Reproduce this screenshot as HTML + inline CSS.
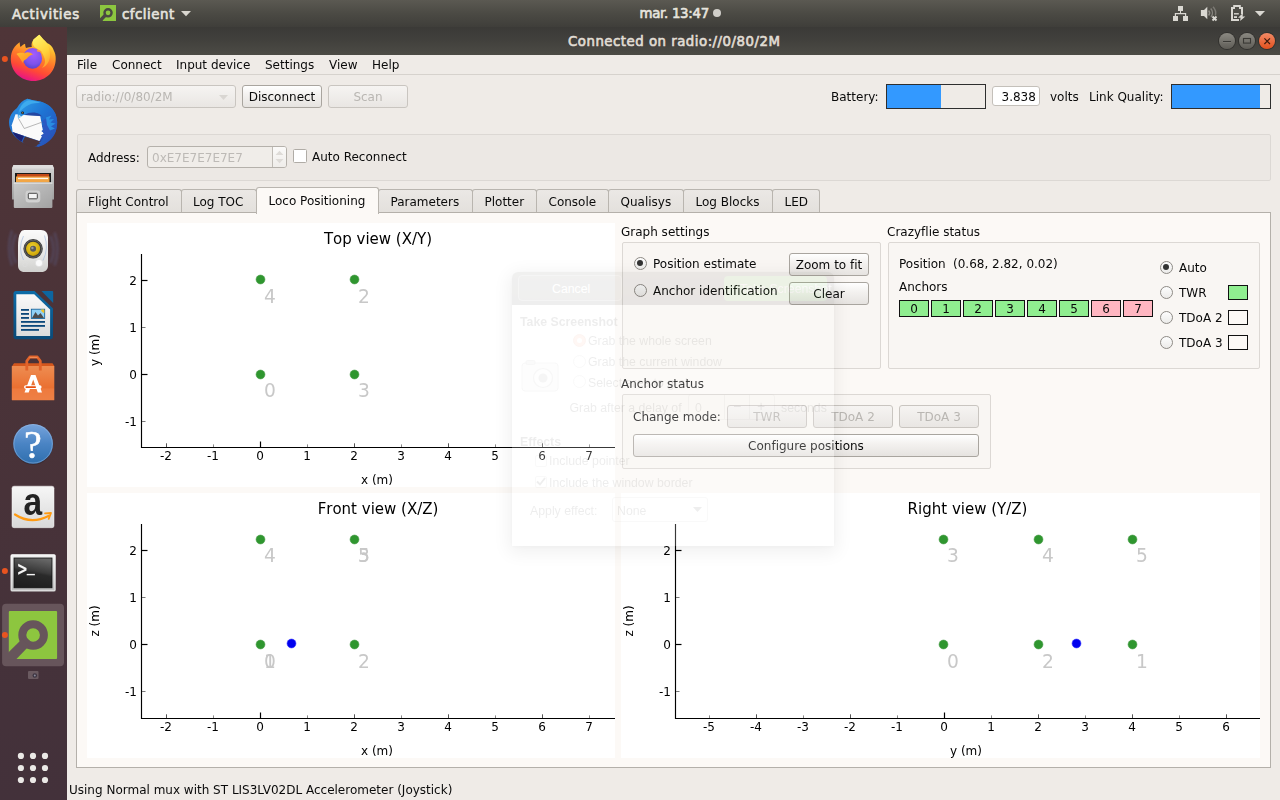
<!DOCTYPE html>
<html lang="en">
<head>
<meta charset="utf-8">
<title>Connected on radio://0/80/2M</title>
<style>
*{box-sizing:border-box;margin:0;padding:0}
html,body{width:1280px;height:800px;overflow:hidden;background:#efebe7}
body{position:relative;font-family:"DejaVu Sans","Liberation Sans",sans-serif;font-size:12px;color:#0a0a0a;line-height:15px;font-variant-ligatures:none}
.abs{position:absolute}
.g{position:absolute;white-space:nowrap;line-height:15px;height:15px}
.t{position:absolute;white-space:nowrap;line-height:17px;height:17px}
#topbar{position:absolute;left:0;top:0;width:1280px;height:27px;background:linear-gradient(#5b5952 0%,#4b4a44 50%,#3f3e3a 100%)}
#topbar .t{color:#e6e4de;font-size:13.33px;-webkit-text-stroke:0.62px #e6e4de;letter-spacing:0.7px;line-height:19px;height:19px}
#dock{position:absolute;left:0;top:27px;width:67px;height:773px;will-change:transform;background:linear-gradient(#4f3538 0%,#4b3338 40%,#45323a 80%,#43313a 100%)}
#titlebar{position:absolute;left:67px;top:27px;width:1213px;height:28px;background:linear-gradient(#3b3a37 0%,#42413d 50%,#4c4b45 100%)}
#titlebar .t{color:#e1ddd4;font-size:13.33px;-webkit-text-stroke:0.62px #e1ddd4;letter-spacing:0.49px;line-height:19px;height:19px}
.wbtn{position:absolute;top:6px;width:16px;height:16px;border-radius:50%;background:linear-gradient(#8b8982,#5e5c56);box-shadow:0 0 0 1px #32312e}
#win{position:absolute;left:0;top:0;width:1280px;height:800px;will-change:transform}
#menubar{position:absolute;left:67px;top:55px;width:1213px;height:20px;border-bottom:1px solid #d6d2cd}
.btn{position:absolute;height:23px;border:1px solid #a9a59f;border-radius:3px;background:linear-gradient(#ffffff 0%,#f4f2f0 40%,#e6e3e0 100%);text-align:center;line-height:23px;font-size:12px;color:#0a0a0a;white-space:nowrap}
.btn.dis{color:#b9b6b2;border-color:#c9c5c0;background:linear-gradient(#f6f4f2,#e9e6e3)}
.grp{position:absolute;border:1px solid #dcd8d4;border-radius:2px;background:rgba(0,0,0,0.013)}
.tab{position:absolute;top:189px;height:24px;border:1px solid #b9b5af;border-bottom:none;border-radius:3px 3px 0 0;background:linear-gradient(#ebe8e5,#e3e0dc);font-size:12px;line-height:25px;padding-left:11.5px;white-space:nowrap}
.tab.sel{top:187px;height:27px;background:#fcf9f6;line-height:27px;z-index:3;padding-left:11.5px}
#pane{position:absolute;left:76px;top:212px;width:1195px;height:556px;border:1px solid #b4b0aa;background:#fcf9f6}
.plot{position:absolute;background:#fff}
.radio{position:absolute;width:13px;height:13px;border-radius:50%;border:1px solid #8e8a85;background:linear-gradient(#fdfdfd,#ecebe9)}
.radio.on::after{content:"";position:absolute;left:2.5px;top:2.5px;width:6px;height:6px;border-radius:50%;background:#333}
.anc{position:absolute;top:0;width:30px;height:17px;border:1px solid #111;font-size:12px;line-height:16px;text-align:center}
.sw{position:absolute;width:20px;height:15px;border:1px solid #111}
svg{position:absolute;overflow:visible}
svg text{font-family:"DejaVu Sans","Liberation Sans",sans-serif;font-kerning:none}
</style>
</head>
<body>

<div id="topbar">
<div class="t" style="left:12px;top:5px">Activities</div>
<svg style="left:100px;top:5px" width="16" height="16" viewBox="0 0 16 16"><rect width="16" height="16" fill="#8cc63f"/><circle cx="8.050" cy="7.800" r="3.550" fill="none" stroke="#4a4843" stroke-width="2.400"/><path d="M0 13.200L4.600 8.600L7 11L2.800 15.200V16H0z" fill="#4a4843"/></svg>

<div class="t" style="left:122px;top:5px;letter-spacing:0.5px">cfclient</div>
<svg style="left:181px;top:11px" width="10" height="6" viewBox="0 0 10 6"><path d="M0 0h10L5 5.300z" fill="#d9d6cf"/></svg>
<div class="t" style="left:639.5px;top:4px;letter-spacing:-0.29px">mar. 13:47</div>
<div class="abs" style="left:713px;top:9px;width:8px;height:8px;border-radius:50%;background:#d0cec9"></div>
<svg style="left:1172px;top:5px" width="96" height="17" viewBox="0 0 96 17"><g fill="#dad8d2"><rect x="6" y="1" width="5" height="5"/><rect x="1" y="11" width="5" height="5"/><rect x="11" y="11" width="5" height="5"/><path d="M8 6h1v2h5.200v3h-1.200v-1.800h-9v1.800h-1.200v-3h5.200z"/><path d="M28.900 5.100h3.100l3.300-3.300v12.400l-3.300-3.300h-3.100z"/><g fill="none" stroke-width="1.500"><path d="M36.600 5.600a3.600 3.600 0 0 1 0 4.800" stroke="#8f8d87"/><path d="M38.700 3.600a6.400 6.400 0 0 1 0.300 8.400" stroke="#85837d"/><path d="M41 1.700a9.300 9.300 0 0 1 2.400 8.600" stroke="#7b7973"/><path d="M40.500 11.500l4 4M44.500 11.500l-4 4" stroke="#dad8d2" stroke-width="1.900"/></g><path d="M59 2h2.200v-2h7.600v2h2.200v7h-2v-5h-2v-2h-4v2h-2v10h6v2h-8z"/><rect x="62" y="8.100" width="4.800" height="1.400"/><rect x="62" y="11.200" width="3" height="1.800"/><path d="M71 8.100l-5 4.600h2.600l-0.500 3.400 5.200-4.700h-2.700z"/><path d="M82.900 5.900h10.100l-5.050 5.300z"/></g></svg>

</div>
<div id="dock">
<svg style="left:0;top:0" width="67" height="773" viewBox="0 27 67 773">
<defs>
<linearGradient id="ffb" x1="0.72" y1="0.05" x2="0.38" y2="1"><stop offset="0" stop-color="#fff44f"/><stop offset="0.25" stop-color="#ffb52d"/><stop offset="0.5" stop-color="#ff7a2a"/><stop offset="0.74" stop-color="#ff4a35"/><stop offset="0.88" stop-color="#f52a62"/><stop offset="1" stop-color="#e31587"/></linearGradient>
<radialGradient id="ffg" cx="0.55" cy="0.3" r="0.8"><stop offset="0" stop-color="#a35cff"/><stop offset="0.6" stop-color="#7d52ec"/><stop offset="1" stop-color="#4a3fc4"/></radialGradient>
<linearGradient id="fffl" x1="0.3" y1="0" x2="0.8" y2="1"><stop offset="0" stop-color="#fff36a"/><stop offset="0.6" stop-color="#ffd53a"/><stop offset="1" stop-color="#ffa12c"/></linearGradient>
<linearGradient id="ffhead" x1="0" y1="0" x2="1" y2="1"><stop offset="0" stop-color="#ffbd2f"/><stop offset="1" stop-color="#ff8a20"/></linearGradient>
<linearGradient id="tbb" x1="0.2" y1="0" x2="0.8" y2="1"><stop offset="0" stop-color="#2a8fe0"/><stop offset="0.5" stop-color="#1f6fd0"/><stop offset="1" stop-color="#2b3fa8"/></linearGradient>
<linearGradient id="tbh" x1="0" y1="0" x2="1" y2="1"><stop offset="0" stop-color="#2f9fe8"/><stop offset="0.45" stop-color="#1e74d4"/><stop offset="1" stop-color="#2a48b0"/></linearGradient>
<linearGradient id="fcab" x1="0" y1="0" x2="0" y2="1"><stop offset="0" stop-color="#d6d6d6"/><stop offset="1" stop-color="#9d9d9d"/></linearGradient>
<linearGradient id="fdrw" x1="0" y1="0" x2="1" y2="1"><stop offset="0" stop-color="#c9c9c9"/><stop offset="1" stop-color="#a2a2a2"/></linearGradient>
<linearGradient id="rb" x1="0" y1="0" x2="0" y2="1"><stop offset="0" stop-color="#fbfbfb"/><stop offset="0.6" stop-color="#e6e6e4"/><stop offset="1" stop-color="#d0d0ce"/></linearGradient>
<radialGradient id="rby" cx="0.45" cy="0.4" r="0.7"><stop offset="0" stop-color="#f0d435"/><stop offset="0.7" stop-color="#d3ad0e"/><stop offset="1" stop-color="#a88708"/></radialGradient>
<linearGradient id="lob" x1="0" y1="0" x2="0" y2="1"><stop offset="0" stop-color="#0c6ca8"/><stop offset="1" stop-color="#0a4a78"/></linearGradient>
<linearGradient id="lop" x1="0" y1="0" x2="0" y2="1"><stop offset="0" stop-color="#f9f9f9"/><stop offset="1" stop-color="#dcdcdc"/></linearGradient>
<linearGradient id="usb" x1="0" y1="0" x2="0" y2="1"><stop offset="0" stop-color="#ee8d52"/><stop offset="0.65" stop-color="#ea6f30"/><stop offset="0.66" stop-color="#ee7a3e"/><stop offset="1" stop-color="#ee8045"/></linearGradient>
<linearGradient id="hlp" x1="0" y1="0" x2="0" y2="1"><stop offset="0" stop-color="#77a4dc"/><stop offset="0.5" stop-color="#4a84c4"/><stop offset="1" stop-color="#2f6fae"/></linearGradient>
<linearGradient id="amz" x1="0" y1="0" x2="0" y2="1"><stop offset="0" stop-color="#f6f6f6"/><stop offset="1" stop-color="#d9d9d9"/></linearGradient>
<linearGradient id="trf" x1="0" y1="0" x2="0" y2="1"><stop offset="0" stop-color="#f2f2f2"/><stop offset="1" stop-color="#bdbdbd"/></linearGradient>
<linearGradient id="trs" x1="0.6" y1="0" x2="0.35" y2="1"><stop offset="0" stop-color="#666"/><stop offset="0.42" stop-color="#3a3a3a"/><stop offset="0.5" stop-color="#2a2a2a"/><stop offset="1" stop-color="#1e1e1e"/></linearGradient>
<filter id="blur1" x="-50%" y="-50%" width="200%" height="200%"><feGaussianBlur stdDeviation="0.9"/></filter>
</defs>

<!-- running indicators -->
<circle cx="4.9" cy="59" r="3" fill="#e95420"/>
<circle cx="4.9" cy="571" r="3" fill="#e95420"/>

<!-- firefox -->
<g transform="translate(0 27)">
<path d="M39.400 7.700C42 11 44.500 13.500 46.900 15.900C48.500 16.500 49.500 17.200 50.300 18C52 19.500 53.200 21.500 53.800 23.500C55.200 26 55.800 29 55.700 32C55.700 44.500 46 54 33.500 54C21 54 10.800 44.500 10.800 32C10.800 27.500 12 24 13.400 21.800C15 19 17.500 16.500 19.700 15.200C19.700 17 20 18.800 20.500 20.100C22 18.500 23.500 17.500 25.100 16.800C25.100 18.500 25.500 20 26 20.900C28 20.300 30 20.100 31.800 20.100C31 17.500 32 14.800 33.500 12.600C35.500 10.500 37.500 9 39.400 7.700Z" fill="url(#ffb)"/>
<path d="M39.400 7.700C42 11 44.500 13.500 46.900 15.900C49 20 50 24 50 28C50 34 47 39 42 41C45 38 46 34 44 30C43 26 40 23 36 21C33 19.500 32 16 33.500 12.600C35.500 10.500 37.500 9 39.400 7.700Z" fill="url(#fffl)" opacity="0.9"/>
<ellipse cx="32.500" cy="31.400" rx="9.600" ry="10.300" fill="url(#ffg)"/>
<path d="M16.500 27C19 25.500 22 25.800 24.500 26.200C27 24.500 30 24.800 33 27.500C30.500 28 28.500 29.500 27 31.500C25 33 23.500 33.200 23 36C21 33 19 29.500 16.500 27Z" fill="url(#ffhead)"/>
<path d="M36.500 23.500C39 22.500 41 23.500 42 25.500C40.500 24.800 38.500 24.500 37.500 25C37.500 24.300 37 23.800 36.500 23.500Z" fill="#ff9a3a"/>
</g>

<!-- thunderbird -->
<g transform="translate(0 90)">
<path d="M27.600 8.800C30 9.500 32 10.200 34 10.500C44 11 52 16 55.500 24C57.500 29 57.800 35 56 40.500C53.500 48.500 46 55 37.500 57L34.500 56.200C30 56 24 54 19.500 50.500C13 46 9 39 9 32.500C9 27 12 21.500 17 18C19.500 13.500 23 10 27.600 8.800Z" fill="url(#tbb)"/>
<path d="M15.500 24.300L40.200 26L43.500 43.500L39.400 51.100L12.600 41.900L11.700 35.200Z" fill="#fafafa"/>
<path d="M18.500 28.500L24.300 38.500L41.900 32.200" fill="none" stroke="#9a9a9a" stroke-width="0.700"/>
<path d="M12.600 41.900L24 46L21.500 51.500C17.500 49.500 14.500 46 12.600 41.900Z" fill="#1d2273"/>
<path d="M18 28.500C17 22 20 14 27.600 8.800C30 9.500 32 10.200 34 10.500C44 11 52 16 55.500 24C57.500 29 57.800 35 56 40.500C53.500 48.500 46 55 37.500 57L34.500 56.200C39 54 42 51 43.500 47.500L41 45.500L44.500 43.500L41.500 41L45 39L42 36.500L45 34L42 32L44 29.500C42.500 25 38 22.500 33 22.500C28 22.500 23 24.500 20 27.500Z" fill="url(#tbh)"/>
<path d="M44 29.500L50.500 27L48 31L53 30L49.500 34L54.500 34.500L50 38L54 40L49 42L52 45L47 46L49 49.500L43.500 47.500L41 45.500L44.500 43.500L41.500 41L45 39L42 36.500L45 34L42 32Z" fill="#2e55c0" opacity="0.85"/>
<path d="M22.500 51.800L25 46.400L39.400 51.300L41.500 50.500L38.500 53L40.500 53.300L36.500 55.200L38 56.200L34.300 56.800L29 56.300L24.500 54Z" fill="#4d3438"/>
<path d="M46 27.500L51.500 25.500L49 29.500L54 29L50.500 32.500L55.500 33.500L51 36.500L55 38.500L50 40.500L47 35Z" fill="#2ba3ee" opacity="0.7"/>
<path d="M19 22C20 16.500 23.500 12 28.500 10.200C33 10.300 37 11.200 40.500 13C35 12.500 30 13.500 26 16.500C23 18.500 21 20.500 19 22Z" fill="#45b4f2" opacity="0.75"/>
<path d="M33 22.500C37.500 22.500 41.500 24.500 43.500 28.500L41.800 26.200L24 25C27 23.300 30 22.500 33 22.500Z" fill="#23338f" opacity="0.7"/>
<path d="M18 28.500L18.800 24.500L21.500 26.500Z" fill="#a8dcf2"/>
<circle cx="22.600" cy="22.800" r="1.400" fill="#15151f"/>
<circle cx="22.600" cy="22.800" r="0.600" fill="#c8a050"/>
</g>

<!-- files -->
<g transform="translate(0 153)">
<path d="M13.500 12h39l1.500 3.500v31h-42v-31z" fill="url(#fcab)"/>
<path d="M13.500 12h39l1.500 3.500h-42z" fill="#dedede"/>
<rect x="15" y="20" width="36" height="9.500" fill="#1b1b1b"/>
<rect x="17" y="21" width="32" height="8" fill="#c24a18"/>
<rect x="16" y="23.500" width="33.500" height="6" fill="#f2a646"/>
<rect x="18" y="24.800" width="30" height="1.300" fill="#fff8ee"/>
<rect x="13.800" y="29.500" width="38.600" height="25.500" rx="1" fill="url(#fdrw)"/>
<rect x="13.800" y="29.500" width="38.600" height="1.200" fill="#e4e4e4"/>
<rect x="26" y="38" width="13.800" height="11" rx="2.200" fill="#cfcfcf" stroke="#d6d6d6" stroke-width="0.800"/>
<rect x="28.300" y="40.300" width="9" height="5.500" rx="0.800" fill="#f4f4f4" stroke="#4a4a4a" stroke-width="1"/>
</g>

<!-- rhythmbox -->
<g transform="translate(0 217)">
<g fill="none" stroke="#5d6594" stroke-opacity="0.34" stroke-width="2.600" filter="url(#blur1)">
<path d="M16 17q-7 15 0 29"/><path d="M12 13.500q-6 18 0 35"/>
<path d="M50.500 19q6 14 0 27"/><path d="M54.500 15.500q6 17 0 33"/>
</g>
<path d="M24.500 13h16.500c4.500 0 7 3 7 7.500v28c0 4-2.500 6.500-6.500 6.500h-17c-4 0-6.500-2.500-6.500-6.500v-19c0-6 0.500-11 2.500-14 1-1.800 2.500-2.500 4-2.500z" fill="url(#rb)"/>
<g fill="none" stroke="#9db8de" stroke-opacity="0.6" stroke-width="1"><path d="M23.500 19q-6 12 0 24"/><path d="M43 43.500q6-12 1.500-25"/></g>
<circle cx="33.100" cy="31.800" r="9.700" fill="#3b3b3b"/>
<circle cx="33.100" cy="31.800" r="8.600" fill="none" stroke="#6a6a6a" stroke-width="0.800"/>
<circle cx="33.100" cy="31.800" r="7.100" fill="url(#rby)"/>
<circle cx="33.100" cy="31.800" r="3" fill="#5a5a5a"/>
<circle cx="32.400" cy="31" r="1.200" fill="#9a9a9a"/>
<circle cx="39" cy="46" r="3.600" fill="#fafafa" stroke="#dcdcdc" stroke-width="0.600"/>
<circle cx="25" cy="47.500" r="2.200" fill="none" stroke="#dedede" stroke-width="0.600"/>
</g>

<!-- libreoffice writer -->
<g transform="translate(0 281)">
<path d="M16 10h18.500l18.500 17.500v28.300c0 1.500-1 2.500-2.500 2.500h-34.500c-1.500 0-2.500-1-2.500-2.500v-43.300c0-1.500 1-2.500 2.500-2.500z" fill="url(#lob)"/>
<path d="M41.500 10h10.500c0.800 0 1.200 0.500 1.200 1.200v10.800z" fill="#0d66a0"/>
<path d="M16.300 13.200h17.900l15.900 15.300v26.500h-33.800z" fill="url(#lop)"/>
<g fill="#0b477a"><rect x="21" y="28" width="8" height="1.800"/><rect x="21" y="32" width="8" height="1.800"/><rect x="21" y="36" width="8" height="1.800"/><rect x="21" y="40" width="24" height="1.800"/><rect x="21" y="44" width="24" height="1.800"/><rect x="21" y="48" width="18" height="1.800"/></g>
<rect x="31.300" y="28.200" width="13.400" height="9.300" fill="#8fd0f5" stroke="#0b5a94" stroke-width="0.800"/>
<path d="M32 37l3.500-6 2.500 3.500 2.500-2.500 3.500 5z" fill="#4d4d4d"/>
<path d="M41 28.600h3.300v3.300c-1.800 0-3.300-1.500-3.300-3.300z" fill="#f3c327"/>
</g>

<!-- ubuntu software -->
<g transform="translate(0 345)">
<path d="M14 18.200h38.500l2 3h-42.500z" fill="#d4571d"/>
<rect x="11.800" y="21" width="42.500" height="34.300" rx="0.500" fill="url(#usb)"/>
<path d="M26.800 25.500v-9.500l3-4h7.500l3 4v9.500" fill="none" stroke="#e2632a" stroke-width="2.800" stroke-linejoin="round"/>
<path d="M29.500 12.500h8" stroke="#f08a55" stroke-width="1.200"/>
<path d="M24.500 47.500l6.500-17.500h4.500l6.500 17.500h-4.200l-4.600-13-4.500 13z" fill="#fff"/>
<rect x="24" y="40.300" width="17.600" height="3.600" rx="1.800" fill="#fff"/>
<rect x="25.500" y="41.300" width="10.500" height="1.700" rx="0.800" fill="#e8500f"/>
</g>

<!-- help -->
<g transform="translate(0 409)">
<ellipse cx="33.100" cy="36.500" rx="19" ry="19.500" fill="#2a1c20" opacity="0.35"/>
<circle cx="33.100" cy="34.800" r="19.900" fill="url(#hlp)"/>
<circle cx="33.100" cy="34.800" r="19.200" fill="none" stroke="#a8c6ea" stroke-opacity="0.6" stroke-width="0.7"/>
<text x="33" y="49" style="font-family:'Liberation Serif','DejaVu Serif',serif" font-size="40" text-anchor="middle" fill="#fff" stroke="#fff" stroke-width="0.5">?</text>
</g>

<!-- amazon -->
<g transform="translate(0 473)">
<rect x="12" y="13.200" width="42" height="41.500" rx="2" fill="url(#amz)" stroke="#f4f4f4" stroke-width="0.500"/>
<text transform="translate(32.800 41.600) scale(0.86 1)" style="font-family:'Liberation Sans','DejaVu Sans',sans-serif" font-weight="bold" font-size="39" text-anchor="middle" fill="#222">a</text>
<path d="M15 41.500q16 10.500 33.500 1.500" fill="none" stroke="#ff9a12" stroke-width="2.200" stroke-linecap="round"/>
<path d="M45 40.300l6-0.300-2.300 5.800" fill="none" stroke="#ff9a12" stroke-width="1.800" stroke-linejoin="round" stroke-linecap="round"/>
</g>

<!-- terminal -->
<g transform="translate(0 537)">
<rect x="10.500" y="17.200" width="45.200" height="37.300" rx="1.500" fill="url(#trf)"/>
<rect x="11.300" y="18" width="43.600" height="35.700" rx="1" fill="none" stroke="#fff" stroke-opacity="0.7" stroke-width="0.800"/>
<rect x="14" y="21" width="38" height="29.800" fill="url(#trs)" stroke="#111" stroke-width="0.800"/>
<text transform="translate(17.400 38.600) scale(1 1.28)" style="font-family:'DejaVu Sans Mono','Liberation Mono',monospace" font-weight="bold" font-size="16" fill="#f4f4f4">&gt;</text>
<text x="26.800" y="35.200" style="font-family:'DejaVu Sans Mono','Liberation Mono',monospace" font-weight="bold" font-size="13.500" fill="#f4f4f4">_</text>
</g>

<!-- cfclient (focused) -->
<rect x="2.100" y="603.800" width="61.900" height="62.400" rx="4" fill="#67555b"/>
<rect x="8.800" y="610.900" width="48.300" height="48.100" rx="1" fill="#8dc63f"/>
<circle cx="33.100" cy="635" r="10.800" fill="none" stroke="#67555b" stroke-width="8"/>
<path d="M8 652.800L22 639l7 7-13 13.600h-8z" fill="#67555b"/>
<path d="M22 639l3-3 7.500 7.500-3 3z" fill="#67555b"/>
<circle cx="4.900" cy="635" r="3" fill="#e95420"/>

<!-- tiny fading screenshot icon -->
<rect x="28" y="671" width="10.500" height="8" rx="1" fill="#6a5a60"/>
<circle cx="34.800" cy="675.500" r="2.300" fill="#3c3440"/>
<circle cx="34.800" cy="675.500" r="1" fill="#8a8a9a"/>

<!-- apps grid -->
<g fill="#ebe9e6">
<circle cx="20.900" cy="755.900" r="3.100"/><circle cx="33" cy="755.900" r="3.100"/><circle cx="45" cy="755.900" r="3.100"/>
<circle cx="20.900" cy="768" r="3.100"/><circle cx="33" cy="768" r="3.100"/><circle cx="45" cy="768" r="3.100"/>
<circle cx="20.900" cy="780" r="3.100"/><circle cx="33" cy="780" r="3.100"/><circle cx="45" cy="780" r="3.100"/>
</g>
</svg>

</div>
<div id="titlebar">
<div class="t" style="left:501px;top:4.5px">Connected on radio://0/80/2M</div>
<div class="wbtn" style="left:1152px"><svg style="left:4px;top:8.200px" width="8" height="2" viewBox="0 0 8 2"><rect width="8" height="1.200" fill="#3a3935"/><rect y="1.200" width="8" height="0.800" fill="#9a9891" opacity="0.5"/></svg></div>
<div class="wbtn" style="left:1172px"><svg style="left:4px;top:5.300px" width="8" height="6" viewBox="0 0 8 6"><rect x="0.500" y="0.500" width="7" height="4.600" fill="none" stroke="#3a3935" stroke-width="1.100"/></svg></div>
<div class="wbtn" style="left:1192px;background:linear-gradient(#f28a66,#e2501d)"><svg style="left:4.800px;top:4.800px" width="6.400" height="6.400" viewBox="0 0 6.400 6.400"><path d="M0.400 0.400l5.600 5.600M6 0.400l-5.600 5.600" stroke="#3d1a0c" stroke-width="1.150" fill="none"/></svg></div>
</div>
<div id="win">
<div id="menubar"></div>
<div class="t" style="left:77px;top:57px">File</div>
<div class="t" style="left:112px;top:57px">Connect</div>
<div class="t" style="left:176px;top:57px">Input device</div>
<div class="t" style="left:265px;top:57px">Settings</div>
<div class="t" style="left:329px;top:57px">View</div>
<div class="t" style="left:372px;top:57px">Help</div>

<!-- toolbar -->
<div class="btn dis" style="left:76px;top:85px;width:160px;text-align:left;padding-left:4px">radio://0/80/2M<svg style="left:142px;top:9px" width="9" height="5" viewBox="0 0 9 5"><path d="M0 0h9L4.500 5z" fill="#d9d6d2"/></svg></div>
<div class="btn" style="left:242px;top:85px;width:80px">Disconnect</div>
<div class="btn dis" style="left:328px;top:85px;width:80px">Scan</div>

<div class="t" style="left:831px;top:89px">Battery:</div>
<div class="abs" style="left:886px;top:84px;width:100px;height:25px;border:1px solid #2e2e2e;background:#efebe7"><div class="abs" style="left:0;top:0;width:54px;height:23px;background:#3399ff"></div></div>
<div class="abs" style="left:992px;top:86px;width:48px;height:20px;border:1px solid #c4c0ba;border-radius:3px;background:#fff"></div>
<div class="t" style="left:1001.5px;top:89px">3.838</div>
<div class="t" style="left:1050px;top:89px">volts</div>
<div class="t" style="left:1089px;top:89px">Link Quality:</div>
<div class="abs" style="left:1171px;top:84px;width:100px;height:25px;border:1px solid #2e2e2e;background:#efebe7"><div class="abs" style="left:0;top:0;width:88px;height:23px;background:#3399ff"></div></div>

<!-- address group -->
<div class="grp" style="left:77px;top:134px;width:1194px;height:47px"></div>
<div class="t" style="left:88px;top:150px">Address:</div>
<div class="abs" style="left:147px;top:146px;width:140px;height:22px;border:1px solid #b5b1ab;border-radius:3px;background:#f0ede9"></div>
<div class="abs" style="left:273px;top:147px;width:13px;height:20px;border-radius:0 2px 2px 0;background:linear-gradient(#fbfaf9,#efedea)"></div>
<div class="abs" style="left:272px;top:147px;width:1px;height:20px;background:#bfbbb5"></div>
<svg style="left:275px;top:150px" width="9" height="14" viewBox="0 0 9 14"><path d="M0.500 5L4.500 0.800 8.500 5zM0.500 9l4 4.200L8.500 9z" fill="#dedbd7"/></svg>
<div class="t" style="left:152px;top:150px;color:#bdbab6">0xE7E7E7E7E7</div>
<div class="abs" style="left:293px;top:149px;width:14px;height:14px;border:1px solid #b0aca6;border-radius:1.5px;background:#fff"></div>
<div class="t" style="left:312px;top:149px">Auto Reconnect</div>

<!-- tabs -->
<div class="tab" style="left:76px;width:106px;padding-left:11px">Flight Control</div>
<div class="tab" style="left:181px;width:76px;padding-left:11px">Log TOC</div>
<div class="tab" style="left:378px;width:95px">Parameters</div>
<div class="tab" style="left:472px;width:65px">Plotter</div>
<div class="tab" style="left:536px;width:73px">Console</div>
<div class="tab" style="left:608px;width:76px">Qualisys</div>
<div class="tab" style="left:683px;width:90px">Log Blocks</div>
<div class="tab" style="left:772px;width:48px">LED</div>
<div id="pane"></div>
<div class="tab sel" style="left:256px;width:123px">Loco Positioning</div>

<div class="plot" style="left:87px;top:223px;width:528px;height:264px"></div>
<svg style="left:0;top:0" width="1280" height="800" viewBox="0 0 1280 800">
<text x="378" y="244" font-size="15" text-anchor="middle" fill="#000">Top view (X/Y)</text>
<path d="M141.5 254V447.5H615" fill="none" stroke="#000" stroke-width="1.15"/>
<path d="M166.5 447v-3.7" stroke="#555" stroke-width="1"/>
<text x="166" y="460.3" font-size="12" text-anchor="middle" fill="#000">-2</text>
<path d="M213.5 447v-2.6" stroke="#888" stroke-width="1"/>
<text x="213" y="460.3" font-size="12" text-anchor="middle" fill="#000">-1</text>
<path d="M260.5 447v-5.5" stroke="#000" stroke-width="1.2"/>
<text x="260" y="460.3" font-size="12" text-anchor="middle" fill="#000">0</text>
<path d="M307.5 447v-2.6" stroke="#888" stroke-width="1"/>
<text x="307" y="460.3" font-size="12" text-anchor="middle" fill="#000">1</text>
<path d="M354.5 447v-3.7" stroke="#555" stroke-width="1"/>
<text x="354" y="460.3" font-size="12" text-anchor="middle" fill="#000">2</text>
<path d="M401.5 447v-2.6" stroke="#888" stroke-width="1"/>
<text x="401" y="460.3" font-size="12" text-anchor="middle" fill="#000">3</text>
<path d="M448.5 447v-3.7" stroke="#555" stroke-width="1"/>
<text x="448" y="460.3" font-size="12" text-anchor="middle" fill="#000">4</text>
<path d="M495.5 447v-2.6" stroke="#888" stroke-width="1"/>
<text x="495" y="460.3" font-size="12" text-anchor="middle" fill="#000">5</text>
<path d="M542.5 447v-3.7" stroke="#555" stroke-width="1"/>
<text x="542" y="460.3" font-size="12" text-anchor="middle" fill="#000">6</text>
<path d="M589.5 447v-2.6" stroke="#888" stroke-width="1"/>
<text x="589" y="460.3" font-size="12" text-anchor="middle" fill="#000">7</text>
<path d="M142 280.5h5.5" stroke="#000" stroke-width="1.2"/>
<text x="137" y="284.9" font-size="12" text-anchor="end" fill="#000">2</text>
<path d="M142 327.5h3.5" stroke="#777" stroke-width="1"/>
<text x="137" y="331.9" font-size="12" text-anchor="end" fill="#000">1</text>
<path d="M142 374.5h5.5" stroke="#000" stroke-width="1.2"/>
<text x="137" y="378.9" font-size="12" text-anchor="end" fill="#000">0</text>
<path d="M142 421.5h3.5" stroke="#777" stroke-width="1"/>
<text x="137" y="425.9" font-size="12" text-anchor="end" fill="#000">-1</text>
<text x="377" y="484" font-size="12" text-anchor="middle" fill="#000">x (m)</text>
<text transform="translate(98.7 350) rotate(-90)" font-size="12" text-anchor="middle" fill="#000">y (m)</text>
<text x="264.1" y="302.5" font-size="18.67" fill="#c8c8c8">4</text>
<text x="358.1" y="302.5" font-size="18.67" fill="#c8c8c8">2</text>
<text x="264.1" y="397" font-size="18.67" fill="#c8c8c8">0</text>
<text x="358.1" y="397" font-size="18.67" fill="#c8c8c8">3</text>
<circle cx="260.5" cy="279.5" r="4.45" fill="#2f962f" stroke="#4fa04f" stroke-width="0.6"/>
<circle cx="354.5" cy="279.5" r="4.45" fill="#2f962f" stroke="#4fa04f" stroke-width="0.6"/>
<circle cx="260.5" cy="374.5" r="4.45" fill="#2f962f" stroke="#4fa04f" stroke-width="0.6"/>
<circle cx="354.5" cy="374.5" r="4.45" fill="#2f962f" stroke="#4fa04f" stroke-width="0.6"/>
</svg>
<div class="plot" style="left:87px;top:493px;width:528px;height:265px"></div>
<svg style="left:0;top:0" width="1280" height="800" viewBox="0 0 1280 800">
<text x="378" y="514" font-size="15" text-anchor="middle" fill="#000">Front view (X/Z)</text>
<path d="M141.5 524V718.5H615" fill="none" stroke="#000" stroke-width="1.15"/>
<path d="M166.5 718v-3.7" stroke="#555" stroke-width="1"/>
<text x="166" y="731.3" font-size="12" text-anchor="middle" fill="#000">-2</text>
<path d="M213.5 718v-2.6" stroke="#888" stroke-width="1"/>
<text x="213" y="731.3" font-size="12" text-anchor="middle" fill="#000">-1</text>
<path d="M260.5 718v-5.5" stroke="#000" stroke-width="1.2"/>
<text x="260" y="731.3" font-size="12" text-anchor="middle" fill="#000">0</text>
<path d="M307.5 718v-2.6" stroke="#888" stroke-width="1"/>
<text x="307" y="731.3" font-size="12" text-anchor="middle" fill="#000">1</text>
<path d="M354.5 718v-3.7" stroke="#555" stroke-width="1"/>
<text x="354" y="731.3" font-size="12" text-anchor="middle" fill="#000">2</text>
<path d="M401.5 718v-2.6" stroke="#888" stroke-width="1"/>
<text x="401" y="731.3" font-size="12" text-anchor="middle" fill="#000">3</text>
<path d="M448.5 718v-3.7" stroke="#555" stroke-width="1"/>
<text x="448" y="731.3" font-size="12" text-anchor="middle" fill="#000">4</text>
<path d="M495.5 718v-2.6" stroke="#888" stroke-width="1"/>
<text x="495" y="731.3" font-size="12" text-anchor="middle" fill="#000">5</text>
<path d="M542.5 718v-3.7" stroke="#555" stroke-width="1"/>
<text x="542" y="731.3" font-size="12" text-anchor="middle" fill="#000">6</text>
<path d="M589.5 718v-2.6" stroke="#888" stroke-width="1"/>
<text x="589" y="731.3" font-size="12" text-anchor="middle" fill="#000">7</text>
<path d="M142 550.5h5.5" stroke="#000" stroke-width="1.2"/>
<text x="137" y="554.9" font-size="12" text-anchor="end" fill="#000">2</text>
<path d="M142 597.5h3.5" stroke="#777" stroke-width="1"/>
<text x="137" y="601.9" font-size="12" text-anchor="end" fill="#000">1</text>
<path d="M142 644.5h5.5" stroke="#000" stroke-width="1.2"/>
<text x="137" y="648.9" font-size="12" text-anchor="end" fill="#000">0</text>
<path d="M142 691.5h3.5" stroke="#777" stroke-width="1"/>
<text x="137" y="695.9" font-size="12" text-anchor="end" fill="#000">-1</text>
<text x="377" y="755" font-size="12" text-anchor="middle" fill="#000">x (m)</text>
<text transform="translate(98.7 621) rotate(-90)" font-size="12" text-anchor="middle" fill="#000">z (m)</text>
<text x="264.1" y="562" font-size="18.67" fill="#c8c8c8">4</text>
<text x="358.1" y="562" font-size="18.67" fill="#c8c8c8">5</text>
<text x="358.1" y="562" font-size="18.67" fill="#c8c8c8">3</text>
<text x="264.1" y="667.5" font-size="18.67" fill="#c8c8c8">0</text>
<text x="264.1" y="667.5" font-size="18.67" fill="#c8c8c8">1</text>
<text x="358.1" y="667.5" font-size="18.67" fill="#c8c8c8">2</text>
<circle cx="260.5" cy="539.5" r="4.45" fill="#2f962f" stroke="#4fa04f" stroke-width="0.6"/>
<circle cx="354.5" cy="539.5" r="4.45" fill="#2f962f" stroke="#4fa04f" stroke-width="0.6"/>
<circle cx="260.5" cy="644.5" r="4.45" fill="#2f962f" stroke="#4fa04f" stroke-width="0.6"/>
<circle cx="354.5" cy="644.5" r="4.45" fill="#2f962f" stroke="#4fa04f" stroke-width="0.6"/>
<circle cx="291.5" cy="643.5" r="4.45" fill="#0000ee" stroke="#3a3aff" stroke-width="0.6"/>
</svg>
<div class="plot" style="left:621px;top:493px;width:639px;height:265px"></div>
<svg style="left:0;top:0" width="1280" height="800" viewBox="0 0 1280 800">
<text x="967.5" y="514" font-size="15" text-anchor="middle" fill="#000">Right view (Y/Z)</text>
<path d="M675.5 524V718.5H1260" fill="none" stroke="#000" stroke-width="1.15"/>
<path d="M709.5 718v-2.6" stroke="#888" stroke-width="1"/>
<text x="709" y="731.3" font-size="12" text-anchor="middle" fill="#000">-5</text>
<path d="M756.5 718v-3.7" stroke="#555" stroke-width="1"/>
<text x="756" y="731.3" font-size="12" text-anchor="middle" fill="#000">-4</text>
<path d="M803.5 718v-2.6" stroke="#888" stroke-width="1"/>
<text x="803" y="731.3" font-size="12" text-anchor="middle" fill="#000">-3</text>
<path d="M850.5 718v-3.7" stroke="#555" stroke-width="1"/>
<text x="850" y="731.3" font-size="12" text-anchor="middle" fill="#000">-2</text>
<path d="M897.5 718v-2.6" stroke="#888" stroke-width="1"/>
<text x="897" y="731.3" font-size="12" text-anchor="middle" fill="#000">-1</text>
<path d="M944.5 718v-5.5" stroke="#000" stroke-width="1.2"/>
<text x="944" y="731.3" font-size="12" text-anchor="middle" fill="#000">0</text>
<path d="M991.5 718v-2.6" stroke="#888" stroke-width="1"/>
<text x="991" y="731.3" font-size="12" text-anchor="middle" fill="#000">1</text>
<path d="M1038.5 718v-3.7" stroke="#555" stroke-width="1"/>
<text x="1038" y="731.3" font-size="12" text-anchor="middle" fill="#000">2</text>
<path d="M1085.5 718v-2.6" stroke="#888" stroke-width="1"/>
<text x="1085" y="731.3" font-size="12" text-anchor="middle" fill="#000">3</text>
<path d="M1132.5 718v-3.7" stroke="#555" stroke-width="1"/>
<text x="1132" y="731.3" font-size="12" text-anchor="middle" fill="#000">4</text>
<path d="M1179.5 718v-2.6" stroke="#888" stroke-width="1"/>
<text x="1179" y="731.3" font-size="12" text-anchor="middle" fill="#000">5</text>
<path d="M1226.5 718v-3.7" stroke="#555" stroke-width="1"/>
<text x="1226" y="731.3" font-size="12" text-anchor="middle" fill="#000">6</text>
<path d="M676 550.5h5.5" stroke="#000" stroke-width="1.2"/>
<text x="671" y="554.9" font-size="12" text-anchor="end" fill="#000">2</text>
<path d="M676 597.5h3.5" stroke="#777" stroke-width="1"/>
<text x="671" y="601.9" font-size="12" text-anchor="end" fill="#000">1</text>
<path d="M676 644.5h5.5" stroke="#000" stroke-width="1.2"/>
<text x="671" y="648.9" font-size="12" text-anchor="end" fill="#000">0</text>
<path d="M676 691.5h3.5" stroke="#777" stroke-width="1"/>
<text x="671" y="695.9" font-size="12" text-anchor="end" fill="#000">-1</text>
<text x="966" y="755" font-size="12" text-anchor="middle" fill="#000">y (m)</text>
<text transform="translate(632.7 621) rotate(-90)" font-size="12" text-anchor="middle" fill="#000">z (m)</text>
<text x="947.1" y="562" font-size="18.67" fill="#c8c8c8">3</text>
<text x="1042.1" y="562" font-size="18.67" fill="#c8c8c8">4</text>
<text x="1136.1" y="562" font-size="18.67" fill="#c8c8c8">5</text>
<text x="947.1" y="667.5" font-size="18.67" fill="#c8c8c8">0</text>
<text x="1042.1" y="667.5" font-size="18.67" fill="#c8c8c8">2</text>
<text x="1136.1" y="667.5" font-size="18.67" fill="#c8c8c8">1</text>
<circle cx="943.5" cy="539.5" r="4.45" fill="#2f962f" stroke="#4fa04f" stroke-width="0.6"/>
<circle cx="1038.5" cy="539.5" r="4.45" fill="#2f962f" stroke="#4fa04f" stroke-width="0.6"/>
<circle cx="1132.5" cy="539.5" r="4.45" fill="#2f962f" stroke="#4fa04f" stroke-width="0.6"/>
<circle cx="943.5" cy="644.5" r="4.45" fill="#2f962f" stroke="#4fa04f" stroke-width="0.6"/>
<circle cx="1038.5" cy="644.5" r="4.45" fill="#2f962f" stroke="#4fa04f" stroke-width="0.6"/>
<circle cx="1132.5" cy="644.5" r="4.45" fill="#2f962f" stroke="#4fa04f" stroke-width="0.6"/>
<circle cx="1076.5" cy="643.5" r="4.45" fill="#0000ee" stroke="#3a3aff" stroke-width="0.6"/>
</svg>

<!-- graph settings -->
<div class="t" style="left:621px;top:224px">Graph settings</div>
<div class="grp" style="left:622px;top:242px;width:259px;height:127px"></div>
<div class="radio on" style="left:633.5px;top:256.5px"></div>
<div class="t" style="left:653px;top:256px">Position estimate</div>
<div class="radio" style="left:633.5px;top:283.5px"></div>
<div class="t" style="left:653px;top:283px">Anchor identification</div>
<div class="btn" style="left:789px;top:253px;width:80px">Zoom to fit</div>
<div class="btn" style="left:789px;top:282px;width:80px">Clear</div>

<!-- anchor status -->
<div class="t" style="left:621px;top:376px">Anchor status</div>
<div class="grp" style="left:622px;top:394px;width:369px;height:75px"></div>
<div class="t" style="left:633px;top:409px">Change mode:</div>
<div class="btn dis" style="left:727px;top:405px;width:80px">TWR</div>
<div class="btn dis" style="left:813px;top:405px;width:80px">TDoA 2</div>
<div class="btn dis" style="left:899px;top:405px;width:80px">TDoA 3</div>
<div class="btn" style="left:633px;top:434px;width:346px">Configure positions</div>

<!-- crazyflie status -->
<div class="t" style="left:887px;top:224px">Crazyflie status</div>
<div class="grp" style="left:888px;top:242px;width:372px;height:127px"></div>
<div class="t" style="left:899px;top:256px">Position</div>
<div class="t" style="left:953px;top:256px">(0.68, 2.82, 0.02)</div>
<div class="t" style="left:899px;top:279px">Anchors</div>
<div class="abs" style="left:899px;top:300px;width:256px;height:17px">
<div class="anc" style="left:0;background:#90ee90">0</div>
<div class="anc" style="left:32px;background:#90ee90">1</div>
<div class="anc" style="left:64px;background:#90ee90">2</div>
<div class="anc" style="left:96px;background:#90ee90">3</div>
<div class="anc" style="left:128px;background:#90ee90">4</div>
<div class="anc" style="left:160px;background:#90ee90">5</div>
<div class="anc" style="left:192px;background:#ffb6c1">6</div>
<div class="anc" style="left:224px;background:#ffb6c1">7</div>
</div>
<div class="radio on" style="left:1159.5px;top:260.5px"></div>
<div class="t" style="left:1179px;top:260px">Auto</div>
<div class="radio" style="left:1159.5px;top:285.5px"></div>
<div class="t" style="left:1179px;top:285px">TWR</div>
<div class="radio" style="left:1159.5px;top:310.5px"></div>
<div class="t" style="left:1179px;top:310px">TDoA 2</div>
<div class="radio" style="left:1159.5px;top:335.5px"></div>
<div class="t" style="left:1179px;top:335px">TDoA 3</div>
<div class="sw" style="left:1228px;top:285px;background:#90ee90"></div>
<div class="sw" style="left:1228px;top:310px;background:#fcf9f6"></div>
<div class="sw" style="left:1228px;top:335px;background:#fcf9f6"></div>

<!-- status bar -->
<div class="t" style="left:69px;top:782px">Using Normal mux with ST LIS3LV02DL Accelerometer (Joystick)</div>
</div>

<!-- fading "Take Screenshot" dialog ghost -->
<div id="ghost-shadow" class="abs" style="left:512px;top:272px;width:322px;height:274px;border-radius:6px 6px 0 0;box-shadow:0 4px 18px 3px rgba(0,0,0,0.06),0 1px 4px rgba(0,0,0,0.03);pointer-events:none"></div>
<div id="ghost-body" class="abs" style="left:512px;top:305px;width:322px;height:241px;background:rgba(255,255,255,0.22);pointer-events:none"></div>
<div id="ghost" class="abs" style="left:512px;top:272px;width:322px;height:274px;opacity:0.085;pointer-events:none;font-family:'Liberation Sans','DejaVu Sans',sans-serif;font-size:12.3px;color:#2e2e2e">
<div class="abs" style="left:0;top:0;width:322px;height:33px;border-radius:6px 6px 0 0;background:linear-gradient(#4a4944,#35342f)"></div>
<div class="abs" style="left:6px;top:3px;width:104px;height:26px;border:1px solid #fff;border-radius:4px;background:rgba(255,255,255,0.2);opacity:0.35"></div>
<div class="abs" style="left:212px;top:4px;width:103px;height:25px;border-radius:4px;background:#63c74d"></div>
<div class="g" style="left:40px;top:10.2px;color:#fff">Cancel</div>
<div class="g" style="left:228px;top:10.2px;color:#fff">Take Screenshot</div>
<div class="g" style="left:8px;top:42.5px;font-weight:bold">Take Screenshot</div>
<div class="abs" style="left:60.500px;top:62px;width:13px;height:13px;border-radius:50%;border:1px solid #e08a6a;background:#f59a78"></div>
<div class="abs" style="left:64.500px;top:66px;width:5px;height:5px;border-radius:50%;background:#fff"></div>
<div class="g" style="left:76px;top:62px">Grab the whole screen</div>
<div class="abs" style="left:60.500px;top:82.500px;width:13px;height:13px;border-radius:50%;border:1px solid #b5b5b5"></div>
<div class="g" style="left:76px;top:83px">Grab the current window</div>
<div class="abs" style="left:60.500px;top:103px;width:13px;height:13px;border-radius:50%;border:1px solid #b5b5b5"></div>
<div class="g" style="left:76px;top:103.5px">Select area to grab</div>
<svg style="left:9px;top:87px" width="38" height="34" viewBox="0 0 38 34"><rect x="1" y="4" width="36" height="28" rx="3" fill="#e4e4e4" stroke="#aaa" stroke-width="1"/><rect x="5" y="1.500" width="9" height="4" rx="1.500" fill="#bbb" stroke="#999"/><circle cx="22" cy="19" r="9.500" fill="#eee" stroke="#999" stroke-width="1.200"/><circle cx="22" cy="19" r="4.500" fill="#888"/></svg>
<div class="g" style="left:57.500px;top:128.5px">Grab after a delay of</div>
<div class="abs" style="left:176px;top:122px;width:87px;height:26px;border:1px solid #b5b5b5;border-radius:3px;background:#fff"></div>
<div class="abs" style="left:212px;top:123px;width:1px;height:24px;background:#aaa"></div>
<div class="abs" style="left:237px;top:123px;width:1px;height:24px;background:#aaa"></div>
<div class="g" style="left:183px;top:128.5px">0</div>
<div class="g" style="left:221px;top:127px;font-size:14px">&#8722;</div>
<div class="g" style="left:245px;top:127px;font-size:14px">+</div>
<div class="g" style="left:269px;top:128.5px">seconds</div>
<div class="g" style="left:8px;top:162.7px;font-weight:bold">Effects</div>
<div class="abs" style="left:22.500px;top:182.500px;width:12px;height:12px;border:1px solid #b5b5b5;border-radius:2px"></div>
<div class="g" style="left:37px;top:182px">Include pointer</div>
<div class="abs" style="left:22.500px;top:203.500px;width:12px;height:12px;border:1px solid #b5b5b5;border-radius:2px"></div>
<svg style="left:24px;top:205px" width="10" height="9" viewBox="0 0 10 9"><path d="M1 4.500l3 3L9 1" fill="none" stroke="#333" stroke-width="1.800"/></svg>
<div class="g" style="left:37px;top:203.5px">Include the window border</div>
<div class="g" style="left:18px;top:231.7px">Apply effect:</div>
<div class="abs" style="left:100px;top:225px;width:96px;height:25px;border:1px solid #b5b5b5;border-radius:3px"></div>
<div class="g" style="left:105px;top:231.7px">None</div>
<svg style="left:181px;top:235px" width="9" height="5" viewBox="0 0 9 5"><path d="M0 0h9L4.500 5z" fill="#333"/></svg>
</div>

</body>
</html>
